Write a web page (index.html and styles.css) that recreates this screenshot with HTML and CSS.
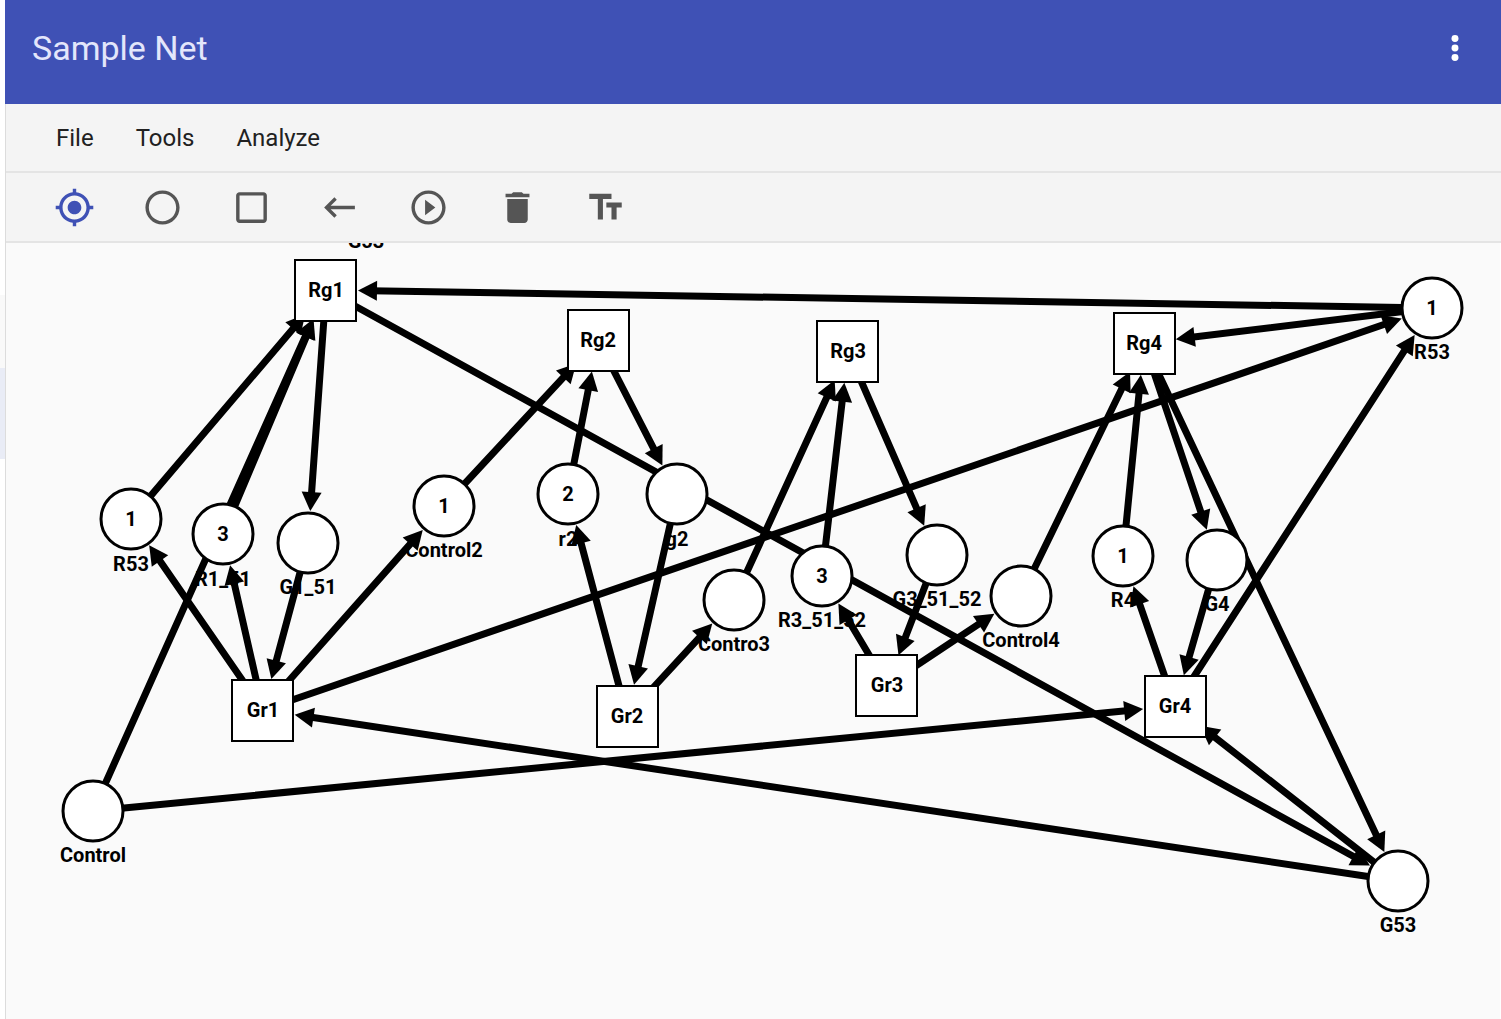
FILE: index.html
```html
<!DOCTYPE html>
<html lang="en">
<head>
<meta charset="utf-8">
<meta name="viewport" content="width=device-width, initial-scale=1">
<title>Sample Net</title>
<link rel="stylesheet" href="styles.css">
</head>
<body>
<div class="app">
  <aside class="drawer">
    <div class="drawer-top"></div>
    <div class="drawer-item"></div>
    <div class="drawer-item-active"></div>
  </aside>
  <main class="main">
    <header class="header">
      <h1 class="title">Sample Net</h1>
      <button class="more" type="button" aria-label="More options">
        <svg viewBox="0 0 24 24"><circle cx="12" cy="6" r="2.2"/><circle cx="12" cy="12" r="2.2"/><circle cx="12" cy="18" r="2.2"/></svg>
      </button>
    </header>
    <section class="workspace">
      <nav class="menu">
        <button type="button">File</button>
        <button type="button">Tools</button>
        <button type="button">Analyze</button>
      </nav>
      <div class="toolbar-row">
        <div class="toolbar" role="toolbar" aria-label="Editing tools">
          <button class="tool active" type="button" aria-label="Select"><svg viewBox="0 0 24 24"><path d="M12 8c-2.21 0-4 1.79-4 4s1.79 4 4 4 4-1.79 4-4-1.79-4-4-4zm8.94 3c-.46-4.17-3.77-7.48-7.94-7.94V1h-2v2.06C6.83 3.52 3.52 6.83 3.06 11H1v2h2.06c.46 4.17 3.77 7.48 7.94 7.94V23h2v-2.06c4.17-.46 7.48-3.77 7.94-7.94H23v-2h-2.06zM12 19c-3.87 0-7-3.13-7-7s3.13-7 7-7 7 3.13 7 7-3.13 7-7 7z"/></svg></button>
          <button class="tool" type="button" aria-label="Place"><svg viewBox="0 0 24 24"><path d="M12 2C6.48 2 2 6.48 2 12s4.48 10 10 10 10-4.48 10-10S17.52 2 12 2zm0 18c-4.42 0-8-3.58-8-8s3.58-8 8-8 8 3.58 8 8-3.58 8-8 8z"/></svg></button>
          <button class="tool" type="button" aria-label="Transition"><svg viewBox="0 0 24 24"><path d="M19 5v14H5V5h14m0-2H5c-1.1 0-2 .9-2 2v14c0 1.1.9 2 2 2h14c1.1 0 2-.9 2-2V5c0-1.1-.9-2-2-2z"/></svg></button>
          <button class="tool" type="button" aria-label="Arc"><svg viewBox="0 0 24 24"><path d="M21 11H6.83l3.58-3.59L9 6l-6 6 6 6 1.41-1.41L6.83 13H21z"/></svg></button>
          <button class="tool" type="button" aria-label="Run"><svg viewBox="0 0 24 24"><path d="M10 16.5l6-4.5-6-4.5v9zM12 2C6.48 2 2 6.48 2 12s4.48 10 10 10 10-4.48 10-10S17.52 2 12 2zm0 18c-4.41 0-8-3.59-8-8s3.59-8 8-8 8 3.59 8 8-3.59 8-8 8z"/></svg></button>
          <button class="tool" type="button" aria-label="Delete"><svg viewBox="0 0 24 24"><path d="M6 19c0 1.1.9 2 2 2h8c1.1 0 2-.9 2-2V7H6v12zM19 4h-3.5l-1-1h-5l-1 1H5v2h14V4z"/></svg></button>
          <button class="tool" type="button" aria-label="Label"><svg viewBox="0 0 24 24"><path d="M2.5 4v3h5v12h3V7h5V4h-13zm19 5h-9v3h3v7h3v-7h3V9z"/></svg></button>
        </div>
      </div>
      <svg class="canvas" role="img" aria-label="Petri net">
        <defs>
          <marker id="head" class="head" markerUnits="userSpaceOnUse" markerWidth="60" markerHeight="20" refX="0" refY="10" orient="auto">
            <path d="M32 10L51 0V20z"/>
          </marker>
        </defs>
        <g transform="translate(-5 -243)">
          <!-- Arcs run from target centre to source centre; the head sits at the target's rim -->
          <g class="arcs">
            <path d="M326 290L131 519"/>
            <path d="M326 290L223 534"/>
            <path d="M326 290L93 811"/>
            <path d="M326 290L1432 308"/>
            <path d="M308 543L326 290"/>
            <path d="M1398 881L326 290"/>
            <path d="M131 519L263 710"/>
            <path d="M223 534L263 710"/>
            <path d="M444 506L263 710"/>
            <path d="M1432 308L263 710"/>
            <path d="M263 710L308 543"/>
            <path d="M263 710L1398 881"/>
            <path d="M598 340L444 506"/>
            <path d="M598 340L568 494"/>
            <path d="M677 494L598 340"/>
            <path d="M627 716L677 494"/>
            <path d="M568 494L627 716"/>
            <path d="M734 600L627 716"/>
            <path d="M848 351L734 600"/>
            <path d="M848 351L822 576"/>
            <path d="M937 555L848 351"/>
            <path d="M887 685L937 555"/>
            <path d="M822 576L887 685"/>
            <path d="M1021 596L887 685"/>
            <path d="M1144 343L1021 596"/>
            <path d="M1144 343L1123 556"/>
            <path d="M1144 343L1432 308"/>
            <path d="M1217 560L1144 343"/>
            <path d="M1398 881L1144 343"/>
            <path d="M1175 706L1217 560"/>
            <path d="M1175 706L93 811"/>
            <path d="M1175 706L1398 881"/>
            <path d="M1123 556L1175 706"/>
            <path d="M1432 308L1175 706"/>
          </g>
          <g class="nodes">
            <circle cx="131" cy="519" r="30"/>
            <circle cx="223" cy="534" r="30"/>
            <circle cx="308" cy="543" r="30"/>
            <circle cx="444" cy="506" r="30"/>
            <circle cx="568" cy="494" r="30"/>
            <circle cx="677" cy="494" r="30"/>
            <circle cx="734" cy="600" r="30"/>
            <circle cx="822" cy="576" r="30"/>
            <circle cx="937" cy="555" r="30"/>
            <circle cx="1021" cy="596" r="30"/>
            <circle cx="1123" cy="556" r="30"/>
            <circle cx="1217" cy="560" r="30"/>
            <circle cx="1432" cy="308" r="30"/>
            <circle cx="1398" cy="881" r="30"/>
            <circle cx="93" cy="811" r="30"/>
            <rect x="295" y="260" width="61" height="61"/>
            <rect x="568" y="310" width="61" height="61"/>
            <rect x="817" y="321" width="61" height="61"/>
            <rect x="1114" y="313" width="61" height="61"/>
            <rect x="232" y="680" width="61" height="61"/>
            <rect x="597" y="686" width="61" height="61"/>
            <rect x="856" y="655" width="61" height="61"/>
            <rect x="1145" y="676" width="61" height="61"/>
          </g>
          <g class="labels">
            <text x="131" y="526">1</text>
            <text x="223" y="541">3</text>
            <text x="444" y="513">1</text>
            <text x="568" y="501">2</text>
            <text x="822" y="583">3</text>
            <text x="1123" y="563">1</text>
            <text x="1432" y="315">1</text>
            <text x="326" y="297">Rg1</text>
            <text x="598" y="347">Rg2</text>
            <text x="848" y="358">Rg3</text>
            <text x="1144" y="350">Rg4</text>
            <text x="263" y="717">Gr1</text>
            <text x="627" y="723">Gr2</text>
            <text x="887" y="692">Gr3</text>
            <text x="1175" y="713">Gr4</text>
            <text x="366" y="248">G53</text>
            <text x="131" y="571">R53</text>
            <text x="223" y="586">R1_51</text>
            <text x="308" y="594">G1_51</text>
            <text x="444" y="557">Control2</text>
            <text x="568" y="546">r2</text>
            <text x="677" y="546">g2</text>
            <text x="734" y="651">Contro3</text>
            <text x="822" y="627">R3_51_52</text>
            <text x="937" y="606">G3_51_52</text>
            <text x="1021" y="647">Control4</text>
            <text x="1123" y="607">R4</text>
            <text x="1217" y="611">G4</text>
            <text x="1432" y="359">R53</text>
            <text x="1398" y="932">G53</text>
            <text x="93" y="862">Control</text>
          </g>
        </g>
      </svg>
    </section>
  </main>
</div>
</body>
</html>
```
FILE: styles.css
```css
* { box-sizing: border-box; }

body {
  margin: 0;
  background: #fff;
  font-family: Roboto, "Liberation Sans", sans-serif;
}

button {
  padding: 0;
  border: 0;
  background: none;
  color: inherit;
  font: inherit;
  cursor: pointer;
}

.app {
  display: flex;
  min-height: 100vh;
}

.drawer { flex: 0 0 5px; }
.drawer-top { height: 295px; }
.drawer-item { height: 73px; background: #f9f9f9; }
.drawer-item-active { height: 91px; background: #e9ecf6; }

.main {
  display: flex;
  flex: 1;
  flex-direction: column;
  min-width: 0;
}

.header {
  display: flex;
  align-items: center;
  justify-content: space-between;
  height: 104px;
  padding: 0 27px 8px 27px;
  background: #3f51b5;
  color: #fff;
}

.title {
  margin: 0;
  color: #e3e6fb;
  font-size: 34px;
  font-weight: 400;
  line-height: 40px;
}

.more, .more svg {
  display: block;
  width: 38px;
  height: 38px;
  fill: currentColor;
}

.workspace {
  display: flex;
  flex: 1;
  flex-direction: column;
  border-left: 1px solid #dcdcdc;
}

.menu {
  display: flex;
  align-items: center;
  gap: 42px;
  height: 69px;
  padding-left: 50px;
  border-bottom: 2px solid #e4e4e4;
  background: #f4f4f4;
  color: #212121;
  font-size: 24px;
  line-height: 28px;
}

.toolbar-row {
  height: 70px;
  padding-left: 24px;
  border-bottom: 2px solid #e4e4e4;
  background: #f4f4f4;
}

.toolbar {
  display: grid;
  grid-template-columns: repeat(7, 1fr);
  max-width: 620px;
  height: 100%;
}

.tool {
  display: flex;
  align-items: center;
  justify-content: center;
  color: #555;
}

.tool.active { color: #3f51b5; }

.tool svg {
  width: 41px;
  height: 41px;
  fill: currentColor;
}

.canvas {
  display: block;
  flex: 1;
  width: 100%;
  min-height: 720px;
  margin-left: -1px;
  background: #fafafa;
  box-shadow: inset 1px 0 #dcdcdc;
}

.head { overflow: visible; }

/* The gap at the start keeps the line from blunting the arrow tip */
.arcs {
  fill: none;
  stroke: #000;
  stroke-width: 7px;
  stroke-dasharray: 0 44 3000;
}

.arcs path { marker-start: url(#head); }
.head path { fill: #000; stroke: none; }

.nodes {
  fill: #fff;
  stroke: #000;
  stroke-width: 2px;
}

.nodes circle { stroke-width: 3px; }

.labels {
  font-size: 20px;
  font-weight: 700;
  text-anchor: middle;
}
```
